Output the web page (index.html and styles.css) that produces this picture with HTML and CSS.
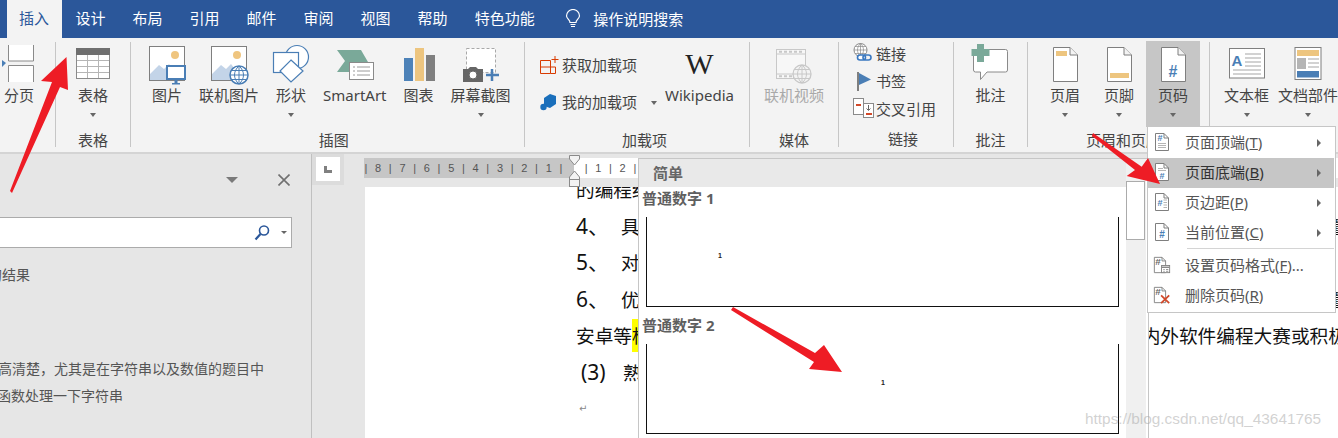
FILE: index.html
```html
<!DOCTYPE html>
<html lang="zh-CN">

<head>
    <meta charset="UTF-8">
    <title>页码 - Word</title>
    <link rel="stylesheet" href="styles.css">
</head>

<body>
    <!-- title tabs -->
    <div class="tabs">
        <div class="tab active">插入</div>
        <div class="tab">设计</div>
        <div class="tab">布局</div>
        <div class="tab">引用</div>
        <div class="tab">邮件</div>
        <div class="tab">审阅</div>
        <div class="tab">视图</div>
        <div class="tab">帮助</div>
        <div class="tab">特色功能</div>
        <div class="tell-me">
            <svg width="16" height="20" viewBox="0 0 16 20" fill="none" stroke="#fff" stroke-width="1.2">
                <path d="M5 13.5C5 11 2 10 1.5 7A6.5 6.5 0 0 1 14.500 7C14 10 11 11 11 13.500Z" />
                <path d="M5.500 15.500H10.500M6 17.500H10" />
            </svg>
            <span>操作说明搜索</span>
        </div>
    </div>

    <!-- ribbon -->
    <div class="ribbon">
        <div class="group g-page">
            <div class="group-body">
                <div class="big">
                    <div class="ico">
                        <svg width="37" height="44" viewBox="0 0 37 44" fill="none">
                            <path d="M1 18L5 21L1 25Z" fill="#4a7eb5" />
                            <path d="M7.500 3V19H32.500V3M7.500 40V23.500H32.500V40" fill="#fff" stroke="#8a8a8a" />
                        </svg>
                    </div>
                    <div class="big-label">分页</div>
                </div>
            </div>
            <div class="group-label">&nbsp;</div>
        </div>

        <div class="group g-table">
            <div class="group-body center">
                <div class="big">
                    <div class="ico">
                        <svg width="36" height="44" viewBox="0 0 36 44" fill="none">
                            <rect x="1.500" y="12.500" width="33" height="24" fill="#fff" stroke="#8a8a8a" />
                            <rect x="1" y="6" width="34" height="7" fill="#6f6f6f" />
                            <path d="M12.500 13V36M23.500 13V36M2 18.500H34M2 24.500H34M2 30.500H34" stroke="#b5b5b5" />
                        </svg>
                    </div>
                    <div class="big-label">表格</div>
                    <div class="caret"></div>
                </div>
            </div>
            <div class="group-label">表格</div>
        </div>

        <div class="group g-illus">
            <div class="group-body">
                <div class="big">
                    <div class="ico">
                        <svg width="40" height="44" viewBox="0 0 40 44" fill="none">
                            <rect x="2.500" y="4.500" width="35" height="34" fill="#fff" stroke="#7f7f7f" />
                            <circle cx="28" cy="13" r="4" fill="#efc57f" />
                            <path d="M3 38V32L12 23L17 27L22 22L32 35V38Z" fill="#c3d4e8" />
                            <rect x="20" y="24" width="18" height="13" fill="#fff" stroke="#4a7eb5" stroke-width="2" />
                            <path d="M27.500 38H30.500V41H33V42.500H25V41H27.500Z" fill="#4a7eb5" />
                        </svg>
                    </div>
                    <div class="big-label">图片</div>
                </div>
                <div class="big">
                    <div class="ico">
                        <svg width="40" height="44" viewBox="0 0 40 44" fill="none">
                            <rect x="2.500" y="4.500" width="35" height="34" fill="#fff" stroke="#7f7f7f" />
                            <circle cx="28" cy="13" r="4" fill="#efc57f" />
                            <path d="M3 38V32L12 23L17 27L22 22L32 35V38Z" fill="#c3d4e8" />
                            <circle cx="30" cy="33" r="9" fill="#fff" stroke="#4a7eb5" stroke-width="1.500" />
                            <path d="M21 33H39M22.500 28.500H37.500M22.500 37.500H37.500M30 24V42M30 24C24 29 24 37 30 42M30 24C36 29 36 37 30 42" stroke="#4a7eb5" />
                        </svg>
                    </div>
                    <div class="big-label">联机图片</div>
                </div>
                <div class="big">
                    <div class="ico">
                        <svg width="38" height="44" viewBox="0 0 38 44" fill="none" stroke="#4a7eb5" stroke-width="1.200">
                            <circle cx="25" cy="15" r="11.500" fill="#fff" />
                            <rect x="1.500" y="10.500" width="25" height="20" fill="#fff" />
                            <path d="M19 18L31 29L19 40L8 29Z" fill="#fff" />
                        </svg>
                    </div>
                    <div class="big-label">形状</div>
                    <div class="caret"></div>
                </div>
                <div class="big">
                    <div class="ico">
                        <svg width="38" height="44" viewBox="0 0 38 44" fill="none">
                            <path d="M1 8H25L32 20L25 30H1L9 19Z" fill="#7aa999" />
                            <rect x="13.500" y="20.500" width="24" height="17" fill="#fff" stroke="#8a8a8a" />
                            <path d="M17 25H19M21 25H34M17 29H19M21 29H34M17 33H19M21 33H34" stroke="#9a9a9a" />
                        </svg>
                    </div>
                    <div class="big-label">SmartArt</div>
                </div>
                <div class="big">
                    <div class="ico">
                        <svg width="32" height="44" viewBox="0 0 32 44">
                            <rect x="1" y="16" width="9" height="23" fill="#4d82b8" />
                            <rect x="12" y="6" width="9" height="33" fill="#edc57f" />
                            <rect x="23" y="13" width="9" height="26" fill="#7f7f7f" />
                        </svg>
                    </div>
                    <div class="big-label">图表</div>
                </div>
                <div class="big">
                    <div class="ico">
                        <svg width="38" height="44" viewBox="0 0 38 44" fill="none">
                            <rect x="4.500" y="6.500" width="29" height="24" fill="#fff" stroke="#a8a8a8" stroke-dasharray="3 2" />
                            <path d="M1 27H6L8 25H14L16 27H21V40H1Z" fill="#666" />
                            <circle cx="11" cy="33" r="4" fill="#fff" stroke="#666" />
                            <path d="M30 27V39M24 33H37" stroke="#4a7eb5" stroke-width="2.500" />
                        </svg>
                    </div>
                    <div class="big-label">屏幕截图</div>
                    <div class="caret"></div>
                </div>
            </div>
            <div class="group-label">插图</div>
        </div>

        <div class="group g-addin">
            <div class="group-body">
                <div class="addin-col">
                    <div class="addin-row">
                        <svg width="19" height="20" viewBox="0 0 19 20" fill="none" stroke="#d83b01">
                            <path d="M.5 5.500H10.500V18.500H.5ZM.5 12H15.500V18.500H10.500M10.500 5.500" />
                            <path d="M15 1V8M11.500 4.500H18.500" />
                        </svg>
                        <span>获取加载项</span>
                    </div>
                    <div class="addin-row">
                        <svg width="19" height="20" viewBox="0 0 19 20">
                            <path d="M4 6L10 2L16 4V12L10 16L4 14Z" fill="#1a6fbb" />
                            <circle cx="3.500" cy="15" r="3.200" fill="#1a6fbb" />
                        </svg>
                        <span>我的加载项</span>
                        <div class="caret side"></div>
                    </div>
                </div>
                <div class="big wiki">
                    <div class="ico"><span class="wiki-w">W</span></div>
                    <div class="big-label">Wikipedia</div>
                </div>
            </div>
            <div class="group-label">加载项</div>
        </div>

        <div class="group g-media">
            <div class="group-body center">
                <div class="big">
                    <div class="ico">
                        <svg width="38" height="44" viewBox="0 0 38 44" fill="none">
                            <rect x="1.500" y="7.500" width="29" height="29" fill="#f7f7f7" stroke="#c8c8c8" />
                            <path d="M2 12H30M2 32H30" stroke="#c8c8c8" />
                            <path d="M4 9.800H28M4 34.200H28" stroke="#c8c8c8" stroke-width="2" stroke-dasharray="3 2" />
                            <circle cx="27" cy="32" r="9" fill="#f3f3f3" stroke="#c8c8c8" stroke-width="1.300" />
                            <path d="M18 32H36M19.500 27.500H34.500M19.500 36.500H34.500M27 23V41M27 23C21 28 21 36 27 41M27 23C33 28 33 36 27 41" stroke="#c8c8c8" />
                        </svg>
                    </div>
                    <div class="big-label disabled">联机视频</div>
                </div>
            </div>
            <div class="group-label">媒体</div>
        </div>

        <div class="group g-links">
            <div class="group-body links">
                <div class="link-row">
                    <svg width="19" height="20" viewBox="0 0 19 20" fill="none">
                        <circle cx="7.500" cy="7" r="6.500" fill="#fff" stroke="#8a8a8a" />
                        <path d="M1 7H14M2 3.500H13M2 10.500H13M7.500 .5V13.500M7.500 .5C3.500 4 3.500 10 7.500 13.500M7.500 .5C11.500 4 11.500 10 7.500 13.500" stroke="#8a8a8a" stroke-width=".7" />
                        <rect x="4.500" y="12" width="8" height="5" rx="2.500" stroke="#3a78c0" stroke-width="1.600" fill="#fff" />
                        <rect x="10" y="12" width="8" height="5" rx="2.500" stroke="#3a78c0" stroke-width="1.600" />
                    </svg>
                    <span>链接</span>
                </div>
                <div class="link-row">
                    <svg width="19" height="20" viewBox="0 0 19 20">
                        <rect x="4" y="1" width="2" height="19" fill="#7f7f7f" />
                        <path d="M6 2L18 8.500L6 14Z" fill="#4a7eb5" />
                    </svg>
                    <span>书签</span>
                </div>
                <div class="link-row tight">
                    <svg width="21" height="20" viewBox="0 0 21 20" fill="none">
                        <rect x="10.500" y="5.500" width="10" height="14" fill="#fff" stroke="#8a8a8a" />
                        <rect x=".5" y=".5" width="10" height="16" fill="#fff" stroke="#8a8a8a" />
                        <path d="M3 7H8" stroke="#d2492a" stroke-width="2" />
                        <path d="M13 16H19" stroke="#d2492a" stroke-width="2" />
                        <path d="M15.500 7V12M13.500 10.500L15.500 12.500L17.500 10.500" stroke="#666" />
                    </svg>
                    <span>交叉引用</span>
                </div>
            </div>
            <div class="group-label">链接</div>
        </div>

        <div class="group g-comment">
            <div class="group-body center">
                <div class="big">
                    <div class="ico">
                        <svg width="38" height="44" viewBox="0 0 38 44" fill="none">
                            <path d="M4.500 7.500H34.500A2 2 0 0 1 36.500 9.500V28A2 2 0 0 1 34.500 30H16L9.500 37.500V30H4.500A2 2 0 0 1 2.500 28V9.500A2 2 0 0 1 4.500 7.500Z" fill="#fff" stroke="#8a8a8a" />
                            <path d="M6 2H13V7H18.500V14H13V20H6V14H.5V7H6Z" fill="#7aa999" />
                        </svg>
                    </div>
                    <div class="big-label">批注</div>
                </div>
            </div>
            <div class="group-label">批注</div>
        </div>

        <div class="group g-header">
            <div class="group-body">
                <div class="big wide">
                    <div class="ico">
                        <svg width="27" height="44" viewBox="0 0 27 44" fill="none">
                            <path d="M1.500 5.500H18L25.500 13V39.500H1.500Z" fill="#fff" stroke="#7f7f7f" />
                            <path d="M18 5.500V13H25.500" fill="#f3f3f3" stroke="#7f7f7f" />
                            <rect x="4" y="9" width="11" height="5" fill="#edc57f" />
                        </svg>
                    </div>
                    <div class="big-label">页眉</div>
                    <div class="caret"></div>
                </div>
                <div class="big wide">
                    <div class="ico">
                        <svg width="27" height="44" viewBox="0 0 27 44" fill="none">
                            <path d="M1.500 5.500H18L25.500 13V39.500H1.500Z" fill="#fff" stroke="#7f7f7f" />
                            <path d="M18 5.500V13H25.500" fill="#f3f3f3" stroke="#7f7f7f" />
                            <rect x="4" y="31" width="19" height="5" fill="#edc57f" />
                        </svg>
                    </div>
                    <div class="big-label">页脚</div>
                    <div class="caret"></div>
                </div>
                <div class="big wide on">
                    <div class="ico">
                        <svg width="27" height="44" viewBox="0 0 27 44" fill="none">
                            <path d="M1.500 5.500H18L25.500 13V39.500H1.500Z" fill="#fff" stroke="#7f7f7f" />
                            <path d="M18 5.500V13H25.500" fill="#f3f3f3" stroke="#7f7f7f" />
                            <text x="13" y="35" class="hash" font-size="16">#</text>
                        </svg>
                    </div>
                    <div class="big-label">页码</div>
                    <div class="caret"></div>
                </div>
            </div>
            <div class="group-label">页眉和页脚</div>
        </div>

        <div class="group g-text">
            <div class="group-body">
                <div class="big narrow">
                    <div class="ico">
                        <svg width="38" height="44" viewBox="0 0 38 44" fill="none">
                            <rect x="1.500" y="6.500" width="35" height="29.500" fill="#fff" stroke="#7f7f7f" />
                            <text x="9" y="24" class="hash" font-size="15">A</text>
                            <path d="M17 12H33M17 16H33M17 20H33M17 24H33M5 28H33M5 32H33" stroke="#a5a5a5" />
                        </svg>
                    </div>
                    <div class="big-label">文本框</div>
                    <div class="caret"></div>
                </div>
                <div class="big narrow">
                    <div class="ico">
                        <svg width="28" height="44" viewBox="0 0 28 44" fill="none">
                            <rect x="1" y="5.500" width="26" height="32" fill="#fff" stroke="#7f7f7f" />
                            <rect x="3" y="8" width="22" height="6" fill="#edc57f" />
                            <rect x="3" y="16" width="9" height="11" fill="#b5b5b5" />
                            <path d="M14 17H25M14 21H25M14 25H25" stroke="#a5a5a5" />
                            <rect x="3" y="29" width="22" height="6.500" fill="#4a7eb5" />
                        </svg>
                    </div>
                    <div class="big-label">文档部件</div>
                    <div class="caret"></div>
                </div>
            </div>
            <div class="group-label">&nbsp;</div>
        </div>
    </div>

    <!-- navigation pane and document -->
    <div class="workspace">
        <div class="pane">
            <div class="pane-head">
                <div class="pane-caret"></div>
                <svg width="12" height="12" viewBox="0 0 12 12" stroke="#707070" stroke-width="1.600">
                    <path d="M.5 .5L11.500 11.500M11.500 .5L.5 11.500" />
                </svg>
            </div>
            <div class="search">
                <svg width="16" height="17" viewBox="0 0 16 17" fill="none" stroke="#2b579a">
                    <circle cx="10" cy="6.500" r="4.500" stroke-width="1.600" />
                    <path d="M6.500 10L1.500 15.500" stroke-width="2.200" />
                </svg>
                <div class="search-caret"></div>
            </div>
            <p class="pane-result">的结果</p>
            <p class="pane-text">高清楚，尤其是在字符串以及数值的题目中</p>
            <p class="pane-text second">函数处理一下字符串</p>
        </div>

        <div class="doc">
            <div class="ruler-row">
                <div class="ruler-tab">
                    <div class="ruler-tab-inner"><span class="ruler-l"></span></div>
                </div>
                <div class="ruler">
                    <div class="ruler-dark">
                        <span>|</span><span>8</span><span>|</span><span>7</span><span>|</span><span>6</span><span>|</span><span>5</span><span>|</span><span>4</span><span>|</span><span>3</span><span>|</span><span>2</span><span>|</span><span>1</span><span>|</span>
                    </div>
                    <div class="ruler-light">
                        <span>|</span><span>1</span><span>|</span><span>2</span><span>|</span>
                    </div>
                    <svg class="indent" width="13" height="32" viewBox="0 0 13 32" fill="#f3f3f3" stroke="#8a8a8a">
                        <path d="M1.500 .5H11.500V4L6.500 10L1.500 4Z" />
                        <path d="M6.500 16L11.500 22V24.500H1.500V22Z" />
                        <rect x="1.500" y="24.500" width="10" height="7" />
                    </svg>
                </div>
            </div>
            <div class="page">
                <div class="doc-text">
                    <p>的编程经验</p>
                    <p><span class="num">4、</span>具<span class="edge">量</span></p>
                    <p><span class="num">5、</span>对</p>
                    <p><span class="num">6、</span>优<span class="edge">量</span></p>
                    <p>安卓等<mark>框</mark><span class="tail">内外软件编程大赛或积极</span></p>
                    <p class="indent-line"><span class="num short">(3)</span>熟</p>
                    <p class="mark-line">↵</p>
                </div>
            </div>
        </div>
    </div>

    <!-- page number gallery -->
    <div class="gallery">
        <div class="gallery-main">
            <div class="gallery-head">简单</div>
            <div class="gallery-item">
                <div class="gallery-title">普通数字 1</div>
                <div class="sample left"><span>1</span></div>
            </div>
            <div class="gallery-item">
                <div class="gallery-title">普通数字 2</div>
                <div class="sample mid"><span>1</span></div>
            </div>
        </div>
        <div class="scrollbar"><div class="thumb"></div></div>
    </div>

    <!-- page number menu -->
    <div class="menu">
        <div class="menu-item">
            <svg width="18" height="20" viewBox="0 0 18 20" fill="none">
                <path d="M2.500 1.500H11L15.500 6V18.500H2.500Z" fill="#fff" stroke="#7f7f7f" />
                <path d="M11 1.500V6H15.500" stroke="#7f7f7f" />
                <text x="7" y="9" class="hash" font-size="9">#</text>
                <path d="M5 11.500H13M5 13.500H13M5 15.500H13" stroke="#b5b5b5" />
            </svg>
            <span>页面顶端(<u>T</u>)</span>
            <i class="arrow"></i>
        </div>
        <div class="menu-item on">
            <svg width="18" height="20" viewBox="0 0 18 20" fill="none">
                <path d="M2.500 1.500H11L15.500 6V18.500H2.500Z" fill="#fff" stroke="#7f7f7f" />
                <path d="M11 1.500V6H15.500" stroke="#7f7f7f" />
                <path d="M5 6.500H10M5 8.500H13" stroke="#b5b5b5" />
                <text x="9" y="17" class="hash" font-size="9">#</text>
            </svg>
            <span>页面底端(<u>B</u>)</span>
            <i class="arrow"></i>
        </div>
        <div class="menu-item">
            <svg width="18" height="20" viewBox="0 0 18 20" fill="none">
                <path d="M2.500 1.500H11L15.500 6V18.500H2.500Z" fill="#fff" stroke="#7f7f7f" />
                <path d="M11 1.500V6H15.500" stroke="#7f7f7f" />
                <text x="7" y="14" class="hash" font-size="9">#</text>
                <path d="M10.500 8H14M10.500 10.500H14M10.500 13H14M10.500 15.500H14" stroke="#b5b5b5" />
            </svg>
            <span>页边距(<u>P</u>)</span>
            <i class="arrow"></i>
        </div>
        <div class="menu-item">
            <svg width="18" height="20" viewBox="0 0 18 20" fill="none">
                <path d="M2.500 1.500H11L15.500 6V18.500H2.500Z" fill="#fff" stroke="#7f7f7f" />
                <path d="M11 1.500V6H15.500" stroke="#7f7f7f" />
                <text x="9" y="16" class="hash" font-size="10">#</text>
            </svg>
            <span>当前位置(<u>C</u>)</span>
            <i class="arrow"></i>
        </div>
        <div class="menu-sep"></div>
        <div class="menu-item">
            <svg width="20" height="20" viewBox="0 0 20 20" fill="none">
                <path d="M1.500 1.500H10L14 5.500V18.500H1.500Z" fill="#fff" stroke="#7f7f7f" />
                <path d="M10 1.500V5.500H14" stroke="#7f7f7f" />
                <text x="5.500" y="10" class="dark-hash" font-size="11">#</text>
                <rect x="9.500" y="10.500" width="9" height="8" fill="#fff" stroke="#7f7f7f" />
                <path d="M10 12.500H18" stroke="#7f7f7f" stroke-width="1.500" />
                <path d="M11.500 15H13M14.500 15H17M11.500 17H13M14.500 17H17" stroke="#8a8a8a" />
            </svg>
            <span>设置页码格式(<u>F</u>)...</span>
        </div>
        <div class="menu-item">
            <svg width="20" height="20" viewBox="0 0 20 20" fill="none">
                <path d="M1.500 1.500H10L14 5.500V18.500H1.500Z" fill="#fff" stroke="#7f7f7f" />
                <path d="M10 1.500V5.500H14" stroke="#7f7f7f" />
                <text x="5.500" y="10" class="dark-hash" font-size="11">#</text>
                <path d="M9 10.500L18 19M18 10.500L9 19" stroke="#d2492a" stroke-width="2" />
            </svg>
            <span>删除页码(<u>R</u>)</span>
        </div>
    </div>

    <!-- red annotation arrows -->
    <svg class="arrows" width="1338" height="438" viewBox="0 0 1338 438" fill="#ee1c25">
        <path d="M66.500 57L68 90L60 87L12 193L10 191L52 82L41 81Z" />
        <path d="M1093 133L1141.700 166.700L1148 158L1160 184L1126.700 176L1135 170L1092 136Z" />
        <path d="M733 307L815 353L824 345L842 372L809 369L814 362L731 310Z" />
    </svg>

    <div class="watermark">https://blog.csdn.net/qq_43641765</div>
</body>

</html>
```

FILE: styles.css
```css
* {
    box-sizing: border-box;
}

body {
    position: relative;
    width: 1338px;
    height: 438px;
    margin: 0;
    overflow: hidden;
    font-family: "Noto Sans", "Noto Sans CJK SC", sans-serif;
    font-size: 15px;
    color: #444;
    background: #e6e6e6;
}

p {
    margin: 0;
}

/* tabs */
.tabs {
    display: flex;
    height: 38px;
    padding-left: 7px;
    background: #2b579a;
    color: #fff;
    line-height: 36px;
}

.tab {
    padding: 0 13.5px;
}

.tab.active {
    padding: 0 13px 0 12px;
    background: #f3f3f3;
    color: #2b579a;
}

.tell-me {
    display: flex;
    align-items: center;
    gap: 12px;
    margin-left: 17px;
}

/* ribbon */
.ribbon {
    display: flex;
    height: 116px;
    padding-top: 4px;
    background: #f3f3f3;
    border-bottom: 2px solid #d4d4d4;
}

.group {
    display: flex;
    flex-direction: column;
    height: 105px;
    border-right: 1px solid #c6c6c6;
}

.group-body {
    display: flex;
    height: 90px;
}

.group-body.center {
    justify-content: center;
}

.group-label {
    height: 15px;
    line-height: 16px;
    text-align: center;
    white-space: nowrap;
}

.g-page { width: 56px; }
.g-table { width: 75px; }
.g-illus { width: 394px; padding-left: 12.5px; }
.g-addin { width: 225px; padding-left: 15px; }
.g-media { width: 89px; }
.g-links { width: 115px; padding-left: 14px; }
.g-comment { width: 74px; }
.g-header { width: 182px; padding-left: 10px; }
.g-text { width: 128px; padding-left: 9.5px; border-right: 0; }

.big {
    display: flex;
    flex-direction: column;
    align-items: center;
    padding: 0 8.5px;
    white-space: nowrap;
}

.g-page .big {
    padding: 0 4px;
}

.big.wide {
    width: 54px;
    padding: 0;
}

.big.narrow {
    padding: 0 4.5px;
}

.big.on {
    height: 86px;
    margin-top: -1px;
    padding-top: 1px;
    background: #c6c6c6;
}

/* icons are wider than their labels and must not push the buttons apart */
.ico {
    display: flex;
    align-items: center;
    justify-content: center;
    width: 0;
    height: 44px;
}

.ico svg {
    display: block;
    flex: none;
}

.big-label {
    margin-top: -1px;
    line-height: 20px;
}

.big-label.disabled {
    color: #a9a9a9;
}

.caret {
    width: 0;
    height: 0;
    margin-top: 8px;
    border: 3.5px solid transparent;
    border-top: 4px solid #666;
    border-bottom: 0;
}

.caret.side {
    margin: 2px 0 0 11px;
}

/* add-ins */
.addin-col {
    display: flex;
    flex-direction: column;
    padding-top: 4px;
}

.addin-row {
    display: flex;
    align-items: center;
    gap: 3px;
    height: 37px;
    white-space: nowrap;
}

.big.wiki {
    margin-left: 8px;
    padding: 0;
}

.wiki-w {
    flex: none;
    font-family: "Liberation Serif", serif;
    font-size: 30px;
    line-height: 44px;
    color: #222;
}

/* links */
.group-body.links {
    flex-direction: column;
    gap: 3.5px;
    margin-top: -1px;
}

.link-row {
    display: flex;
    align-items: center;
    gap: 4px;
    height: 24px;
    white-space: nowrap;
}

.link-row.tight {
    gap: 2px;
}

.link-row svg {
    flex: none;
}

.hash {
    font-family: "Liberation Sans", sans-serif;
    font-weight: 700;
    fill: #4a7eb5;
    text-anchor: middle;
}

.dark-hash {
    font-family: "Liberation Sans", sans-serif;
    font-weight: 700;
    fill: #666;
    text-anchor: middle;
}

/* workspace */
.workspace {
    display: flex;
    height: 284px;
}

.pane {
    flex: none;
    width: 312px;
    overflow: hidden;
    border-right: 1px solid #c0c0c0;
    font-size: 14px;
    color: #555;
}

.pane-head {
    display: flex;
    align-items: center;
    justify-content: flex-end;
    gap: 40px;
    height: 52px;
    padding-right: 21px;
}

.pane-caret {
    width: 0;
    height: 0;
    border: 6px solid transparent;
    border-top: 6px solid #7a7a7a;
    border-bottom: 0;
}

.search {
    position: relative;
    display: flex;
    align-items: center;
    justify-content: flex-end;
    height: 31px;
    margin: 11px 19px 0 -1px;
    padding-right: 21px;
    background: #fff;
    border: 1px solid #ababab;
}

.search-caret {
    position: absolute;
    right: 4px;
    top: 13px;
    width: 0;
    height: 0;
    border: 3px solid transparent;
    border-top: 3px solid #666;
    border-bottom: 0;
}

.pane-result {
    margin: 17px 0 0 -12px;
    line-height: 20px;
}

.pane-text {
    margin: 70px 0 0 -2px;
    line-height: 27px;
    white-space: nowrap;
}

.pane-text.second {
    margin: 0 0 0 -3px;
}

.doc {
    position: relative;
    flex: 1;
    min-width: 0;
    display: flex;
    flex-direction: column;
}

.ruler-row {
    display: flex;
    flex: none;
    height: 33px;
}

.ruler-tab {
    flex: none;
    width: 32px;
    height: 31px;
    padding: 3px 4px;
    background: #dcdcdc;
}

.ruler-tab-inner {
    display: flex;
    align-items: center;
    justify-content: center;
    height: 24px;
    background: #fff;
}

.ruler-l {
    width: 8px;
    height: 7px;
    border-left: 3px solid #808080;
    border-bottom: 3px solid #808080;
}

.ruler {
    position: relative;
    display: flex;
    flex: 1;
    height: 20px;
    margin: 4px 0 0 20px;
    font-family: "Liberation Sans", sans-serif;
    font-size: 11px;
    line-height: 20px;
    color: #555;
}

.ruler-dark,
.ruler-light {
    display: flex;
}

.ruler-dark {
    flex: none;
    justify-content: flex-end;
    width: 210px;
    padding-right: 7px;
    background: #c6c6c6;
}

.ruler-light {
    flex: 1;
    padding-left: 6px;
    background: #fff;
}

.ruler span {
    flex: none;
    width: 12.200px;
    text-align: center;
}

.indent {
    position: absolute;
    left: 204px;
    top: -3px;
}

.page {
    flex: 1;
    min-height: 0;
    margin-left: 53px;
    padding-left: 211px;
    overflow: hidden;
    background: #fff;
    font-size: 18.670px;
    color: #111;
}

.doc-text {
    margin-top: -15px;
    white-space: nowrap;
}

.doc-text p {
    height: 36.500px;
    line-height: 36.500px;
}

.num {
    display: inline-block;
    width: 45px;
    font-size: 21px;
    line-height: 20px;
}

.num.short {
    width: 42px;
}

.indent-line {
    padding-left: 5px;
}

mark {
    padding: 4px 0;
    background: #ffff00;
    color: inherit;
}

.tail {
    margin-left: 491px;
}

.edge {
    margin-left: 692px;
}

.mark-line {
    padding-left: 3px;
    font-family: "DejaVu Sans", sans-serif;
    font-size: 10px;
    color: #888;
}

/* gallery */
.gallery {
    position: absolute;
    left: 638px;
    top: 158px;
    z-index: 2;
    display: flex;
    width: 511px;
    height: 280px;
    overflow: hidden;
    background: #fff;
    border-top: 1px solid #c6c6c6;
    border-left: 1px solid #c6c6c6;
    border-right: 1px solid #c6c6c6;
}

.gallery-main {
    flex: 1;
    min-width: 0;
}

.gallery-head {
    height: 28px;
    padding-left: 14px;
    background: #e9e9e9;
    font-weight: 700;
    line-height: 28px;
    color: #666;
}

.gallery-item {
    margin-bottom: 7px;
}

.gallery-title {
    height: 30px;
    padding-left: 3px;
    font-weight: 700;
    line-height: 22px;
    color: #5f5f5f;
}

.sample {
    display: flex;
    height: 90px;
    margin: 0 7px;
    border: 1px solid #111;
    border-top: 0;
    font-family: "Liberation Sans", sans-serif;
    font-size: 7px;
    font-weight: 700;
    color: #222;
}

.sample.left {
    padding: 35px 0 0 71px;
}

.sample.mid {
    padding: 35px 0 0 234px;
}

.scrollbar {
    flex: none;
    width: 20px;
    margin-right: 2px;
    padding-top: 22px;
    background: #f0f0f0;
}

.thumb {
    width: 19px;
    height: 59px;
    background: #fff;
    border: 1px solid #ababab;
}

/* menu */
.menu {
    position: absolute;
    left: 1147px;
    top: 126px;
    z-index: 3;
    width: 189px;
    height: 187px;
    padding: 1px 1px 0 0;
    background: #fff;
    border: 1px solid #c6c6c6;
    color: #555;
}

.menu-item {
    display: flex;
    align-items: center;
    gap: 14px;
    height: 30px;
    padding-left: 5px;
    white-space: nowrap;
}

.menu-item svg {
    flex: none;
    width: 18px;
    margin-top: -2px;
}

.menu-item span {
    margin-bottom: 3px;
}

.menu-item.on {
    background: #c6c6c6;
    color: #333;
}

.arrow {
    width: 0;
    height: 0;
    margin: 0 13px 0 auto;
    border: 4px solid transparent;
    border-left: 4px solid #666;
    border-right: 0;
}

.menu-sep {
    height: 1px;
    margin: 0 0 2px 39px;
    background: #d4d4d4;
}

/* overlays */
.arrows {
    position: absolute;
    left: 0;
    top: 0;
    z-index: 4;
}

.watermark {
    position: absolute;
    left: 1085px;
    top: 409px;
    z-index: 5;
    font-family: "Liberation Sans", sans-serif;
    font-size: 15.400px;
    line-height: 20px;
    color: rgba(165, 165, 165, 0.5);
}
```
